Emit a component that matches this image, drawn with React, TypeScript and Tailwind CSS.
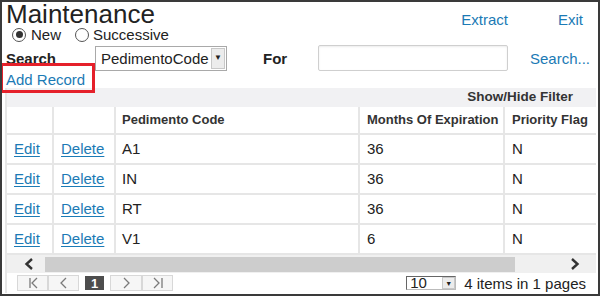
import React from 'react';

const rows = [
  { code: 'A1', months: '36', flag: 'N' },
  { code: 'IN', months: '36', flag: 'N' },
  { code: 'RT', months: '36', flag: 'N' },
  { code: 'V1', months: '6', flag: 'N' },
];

const cols = 'grid grid-cols-[47px_62px_244px_145px_1fr]';

const PagerIcon: React.FC<{ d: string }> = ({ d }) => (
  <svg width="14" height="12" viewBox="0 0 14 12" fill="none" stroke="#7a7a7a" strokeWidth="1.3">
    <path d={d} />
  </svg>
);

const App: React.FC = () => {
  return (
    <div
      className="relative w-[600px] h-[296px] border-2 border-[#3a3a3a] bg-white text-[#222] overflow-hidden"
      style={{ fontFamily: '"Liberation Sans", Arial, sans-serif' }}
    >
      {/* Title + top links */}
      <div className="flex h-[43px]">
        <div className="flex flex-col pl-[4px]">
          <h1 className="text-[26px] leading-[24px] h-[24px] font-normal">Maintenance</h1>
          <div className="flex items-center h-[17px] text-[15px] leading-[17px]">
            <span className="ml-[6px] w-[14px] h-[14px] rounded-full border border-[#555] flex items-center justify-center">
              <span className="w-[7px] h-[7px] rounded-full bg-[#333]" />
            </span>
            <span className="ml-[5px]">New</span>
            <span className="ml-[14px] w-[14px] h-[14px] rounded-full border border-[#555]" />
            <span className="ml-[4px]">Successive</span>
          </div>
        </div>
        <div className="ml-auto flex pt-[9px] pr-[15px] text-[15px] leading-[17px] text-[#1b7ab5]">
          <span>Extract</span>
          <span className="ml-[50px]">Exit</span>
        </div>
      </div>

      {/* Search row */}
      <div className="flex items-center h-[26px] pl-[4px] text-[15px] leading-[17px]">
        <span className="w-[89px] font-bold">Search</span>
        <div className="flex items-center w-[132px] h-[25px] border border-[#a9a9a9] bg-white">
          <span className="pl-[5px] flex-1">PedimentoCode</span>
          <span className="w-[14px] h-[21px] mr-[1px] bg-[#ececec] border border-[#c8c8c8] flex items-center justify-center text-[8px] leading-none">▼</span>
        </div>
        <span className="ml-[36px] w-[55px] font-bold">For</span>
        <div className="w-[190px] h-[26px] border border-[#cfcfcf] rounded-[2px] shadow-[inset_0_1px_2px_rgba(0,0,0,0.08)]" />
        <span className="ml-[22px] text-[#1b7ab5]">Search...</span>
      </div>

      {/* Add record */}
      <div className="h-[17px] pl-[4px] text-[15px] leading-[17px] text-[#1b7ab5]">Add Record</div>

      {/* Grid */}
      <div className="ml-[3px] mr-[2px] border-l-2 border-[#e6e6e6]">
        <div className="h-[19px] bg-[#f1f1f3] flex items-center justify-end pr-[23px] text-[13.5px] font-bold text-[#333]">
          Show/Hide Filter
        </div>
        <div className={`${cols} h-[28px] text-[13px] font-bold text-[#333] border-b-2 border-[#e6e6e6]`}>
          <div className="border-r-2 border-[#e6e6e6]" />
          <div className="border-r-2 border-[#e6e6e6]" />
          <div className="border-r-2 border-[#e6e6e6] flex items-center pl-[6px]">Pedimento Code</div>
          <div className="border-r-2 border-[#e6e6e6] flex items-center pl-[7px]">Months Of Expiration</div>
          <div className="flex items-center pl-[7px]">Priority Flag</div>
        </div>
        {rows.map((r) => (
          <div key={r.code} className={`${cols} h-[30px] text-[15px] border-b-2 border-[#e6e6e6] last:border-b-0`}>
            <div className="border-r-2 border-[#e6e6e6] flex items-center pl-[7px]">
              <span className="text-[#1b7ab5] underline underline-offset-2">Edit</span>
            </div>
            <div className="border-r-2 border-[#e6e6e6] flex items-center pl-[7px]">
              <span className="text-[#1b7ab5] underline underline-offset-2">Delete</span>
            </div>
            <div className="border-r-2 border-[#e6e6e6] flex items-center pl-[6px]">{r.code}</div>
            <div className="border-r-2 border-[#e6e6e6] flex items-center pl-[7px]">{r.months}</div>
            <div className="flex items-center pl-[7px]">{r.flag}</div>
          </div>
        ))}

        {/* Horizontal scrollbar */}
        <div className="flex items-center h-[18px] bg-[#f0f0f0]">
          <div className="w-[38px] flex justify-center pl-[6px]">
            <svg width="10" height="12" viewBox="0 0 10 12" fill="none" stroke="#333" strokeWidth="2.4">
              <path d="M8 1 L2.5 6 L8 11" />
            </svg>
          </div>
          <div className="w-[470px] h-[15px] bg-[#cdcdcd]" />
          <div className="flex-1 flex justify-end pr-[16px]">
            <svg width="10" height="12" viewBox="0 0 10 12" fill="none" stroke="#333" strokeWidth="2.4">
              <path d="M2 1 L7.5 6 L2 11" />
            </svg>
          </div>
        </div>
      </div>

      {/* Pager */}
      <div className="flex items-center h-[20px] ml-[3px] mr-[2px] border-l-2 border-[#e6e6e6] text-[15px] leading-[17px]">
        <div className="flex items-center ml-[10px]">
          <div className="w-[31px] h-[16px] bg-[#f6f6f6] border border-[#d8d8d8] flex items-center justify-center">
            <PagerIcon d="M4 1 V11 M11 1 L6 6 L11 11" />
          </div>
          <div className="w-[31px] h-[16px] bg-[#f6f6f6] border border-[#d8d8d8] flex items-center justify-center">
            <PagerIcon d="M9 1 L4 6 L9 11" />
          </div>
          <div className="ml-[6px] w-[19px] h-[14px] bg-[#4d4d4d] text-white text-[13px] leading-none font-bold flex items-center justify-center">
            1
          </div>
          <div className="ml-[6px] w-[32px] h-[16px] bg-[#f6f6f6] border border-[#d8d8d8] flex items-center justify-center">
            <PagerIcon d="M5 1 L10 6 L5 11" />
          </div>
          <div className="w-[31px] h-[16px] bg-[#f6f6f6] border border-[#d8d8d8] flex items-center justify-center">
            <PagerIcon d="M3 1 L8 6 L3 11 M11 1 V11" />
          </div>
        </div>
        <div className="ml-auto flex items-center pr-[10px]">
          <div className="flex items-center w-[50px] h-[14px] border border-[#666] border-r-[#bbb] border-b-[#bbb] bg-white">
            <span className="pl-[3px] flex-1 text-[15px] leading-[12px]">10</span>
            <span className="w-[13px] h-[12px] bg-[#ececec] border border-[#c8c8c8] flex items-center justify-center text-[7px] leading-none">▼</span>
          </div>
          <span className="ml-[8px]">4 items in 1 pages</span>
        </div>
      </div>

      {/* Highlight annotation */}
      <div className="absolute left-[-2px] top-[61px] w-[95px] h-[30px] border-[3px] border-[#e5202a] pointer-events-none" />
    </div>
  );
};

export default App;
